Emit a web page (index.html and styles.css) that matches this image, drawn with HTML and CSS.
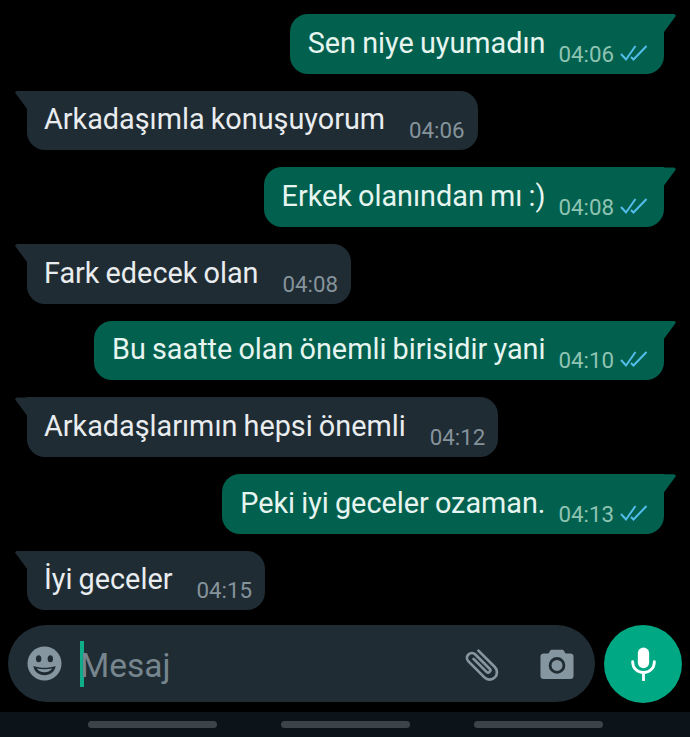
FILE: index.html
```html
<!DOCTYPE html>
<html lang="tr">
<head>
  <meta charset="UTF-8">
  <title>Sohbet</title>
  <link rel="stylesheet" href="styles.css">
</head>
<body>

  <div class="chat-screen">
    <div class="messages">
      <div class="msg out">
        <span class="msg-text">Sen niye uyumadın</span>
        <span class="msg-time">04:06</span>
        <svg class="ticks" viewBox="0 0 28 18"><path d="M1 10l5 5.500L15.500 2M11 13l2.500 2.500L26.500 2"/></svg>
      </div>
      <div class="msg in">
        <span class="msg-text">Arkadaşımla konuşuyorum</span>
        <span class="msg-time">04:06</span>
      </div>
      <div class="msg out">
        <span class="msg-text">Erkek olanından mı :)</span>
        <span class="msg-time">04:08</span>
        <svg class="ticks" viewBox="0 0 28 18"><path d="M1 10l5 5.500L15.500 2M11 13l2.500 2.500L26.500 2"/></svg>
      </div>
      <div class="msg in">
        <span class="msg-text">Fark edecek olan</span>
        <span class="msg-time">04:08</span>
      </div>
      <div class="msg out">
        <span class="msg-text">Bu saatte olan önemli birisidir yani</span>
        <span class="msg-time">04:10</span>
        <svg class="ticks" viewBox="0 0 28 18"><path d="M1 10l5 5.500L15.500 2M11 13l2.500 2.500L26.500 2"/></svg>
      </div>
      <div class="msg in">
        <span class="msg-text">Arkadaşlarımın hepsi önemli</span>
        <span class="msg-time">04:12</span>
      </div>
      <div class="msg out">
        <span class="msg-text">Peki iyi geceler ozaman.</span>
        <span class="msg-time">04:13</span>
        <svg class="ticks" viewBox="0 0 28 18"><path d="M1 10l5 5.500L15.500 2M11 13l2.500 2.500L26.500 2"/></svg>
      </div>
      <div class="msg in">
        <span class="msg-text">İyi geceler</span>
        <span class="msg-time">04:15</span>
      </div>
    </div>

    <div class="composer">
      <div class="input-pill">
        <svg class="emoji-icon" viewBox="0 0 36 36">
          <circle cx="18" cy="18" r="17.500" fill="#8696a0"/>
          <ellipse cx="12" cy="13" rx="2.800" ry="3.600" fill="#202c33"/>
          <ellipse cx="24" cy="13" rx="2.800" ry="3.600" fill="#202c33"/>
          <path d="M6.500 20.500c3.500 1.200 7.500 1.800 11.500 1.800s8-.6 11.500-1.800C28.500 26.500 24 30 18 30S7.500 26.500 6.500 20.500z" fill="#202c33"/>
          <path d="M10 23.200c2.600.5 5.300.7 8 .7s5.400-.2 8-.7c-1.500 2.400-4.500 3.800-8 3.800s-6.500-1.400-8-3.800z" fill="#8696a0"/>
        </svg>
        <span class="caret"></span>
        <span class="placeholder">Mesaj</span>
        <svg class="clip-icon" viewBox="0 0 36 36">
          <path d="M22.500 7v19a6 6 0 0 1-12 0V7.500a4 4 0 0 1 8 0V24a1.800 1.800 0 0 1-3.600 0V9" transform="rotate(-45 18 18)"/>
        </svg>
        <svg class="camera-icon" viewBox="0 0 36 32">
          <path d="M12.500 1h11a2 2 0 0 1 1.800 1.100L27 5h5a3.500 3.500 0 0 1 3.500 3.500v20A3.500 3.500 0 0 1 32 32H4a3.500 3.500 0 0 1-3.500-3.500v-20A3.500 3.500 0 0 1 4 5h5l1.700-2.900A2 2 0 0 1 12.500 1z" fill="#8696a0"/>
          <circle cx="18" cy="17.500" r="7.300" fill="none" stroke="#202c33" stroke-width="3"/>
        </svg>
      </div>
      <div class="mic-button">
        <svg class="mic-icon" viewBox="0 0 26 36">
          <rect x="7" y="0.500" width="12" height="22" rx="6" fill="#fff"/>
          <path d="M1.500 15.500c0 7 5 11.500 11.500 11.500s11.500-4.500 11.500-11.500M13 27v8" fill="none" stroke="#fff" stroke-width="3" stroke-linecap="round"/>
        </svg>
      </div>
    </div>

    <div class="nav-bar">
      <span class="nav-pill"></span>
      <span class="nav-pill"></span>
      <span class="nav-pill"></span>
    </div>
  </div>

</body>
</html>
```

FILE: styles.css
```css
html, body {
  margin: 0;
  background: #000;
}

.chat-screen {
  width: 690px;
  height: 737px;
  display: flex;
  flex-direction: column;
  overflow: hidden;
  font-family: Roboto, sans-serif;
}

.messages {
  flex: 1;
  display: flex;
  flex-direction: column;
  gap: 17.200px;
  padding-top: 14px;
}

.msg {
  position: relative;
  box-sizing: border-box;
  height: 59.500px;
  display: flex;
  align-items: flex-end;
  border-radius: 0 0 18px 18px;
}

.msg::before {
  content: "";
  position: absolute;
  top: 0;
  width: 12px;
  height: 18px;
}

.msg.out {
  align-self: flex-end;
  margin-right: 26px;
  padding: 0 16px 0 18px;
  background: #02604e;
  color: #e6f5ef;
  border-top-left-radius: 18px;
}

.msg.out::before {
  left: 100%;
  background: #02604e;
  clip-path: polygon(0 0, 85% 0, 100% 10%, 0 100%);
}

.msg.in {
  align-self: flex-start;
  margin-left: 27px;
  padding: 0 13px 0 17px;
  background: #202c33;
  color: #e9edef;
  border-top-right-radius: 18px;
}

.msg.in::before {
  right: 100%;
  background: #202c33;
  clip-path: polygon(100% 0, 15% 0, 0 10%, 100% 100%);
}

.msg-text {
  font-size: 28.800px;
  line-height: 34px;
  word-spacing: -1px;
  padding-bottom: 14px;
  white-space: nowrap;
}

.msg-time {
  font-size: 22.300px;
  line-height: 26px;
  padding-bottom: 7px;
  color: #8fc4b3;
}

.msg.out .msg-time {
  margin-left: 13px;
}

.msg.in .msg-time {
  margin-left: 24px;
  color: #85939b;
}

.ticks {
  width: 28px;
  height: 18px;
  margin: 0 0 12px 6px;
  fill: none;
  stroke: #53bdeb;
  stroke-width: 2;
}

.composer {
  display: flex;
  gap: 9px;
  padding: 0 8px;
  margin-bottom: 9px;
}

.input-pill {
  flex: 1;
  height: 77px;
  display: flex;
  align-items: center;
  padding: 0 21px 0 19px;
  background: #202c33;
  border-radius: 39px;
}

.emoji-icon {
  width: 35px;
  height: 35px;
  flex-shrink: 0;
}

.caret {
  width: 4px;
  height: 46px;
  margin: 0 -4px 0 18px;
  background: #0fae88;
}

.placeholder {
  flex: 1;
  font-size: 33.500px;
  padding-top: 4px;
  color: #76858e;
}

.clip-icon {
  width: 44px;
  height: 44px;
  fill: none;
  stroke: #8696a0;
  stroke-width: 2.200;
  stroke-linecap: round;
}

.camera-icon {
  width: 34px;
  height: 32px;
  margin-left: 34px;
}

.mic-button {
  width: 78px;
  height: 78px;
  display: flex;
  align-items: center;
  justify-content: center;
  background: #00a884;
  border-radius: 50%;
}

.mic-icon {
  width: 25px;
  height: 34px;
}

.nav-bar {
  height: 25px;
  display: flex;
  align-items: center;
  justify-content: center;
  gap: 64px;
  background: #0d1419;
}

.nav-pill {
  width: 129px;
  height: 7px;
  border-radius: 4px;
  background: #3d4448;
}
```
